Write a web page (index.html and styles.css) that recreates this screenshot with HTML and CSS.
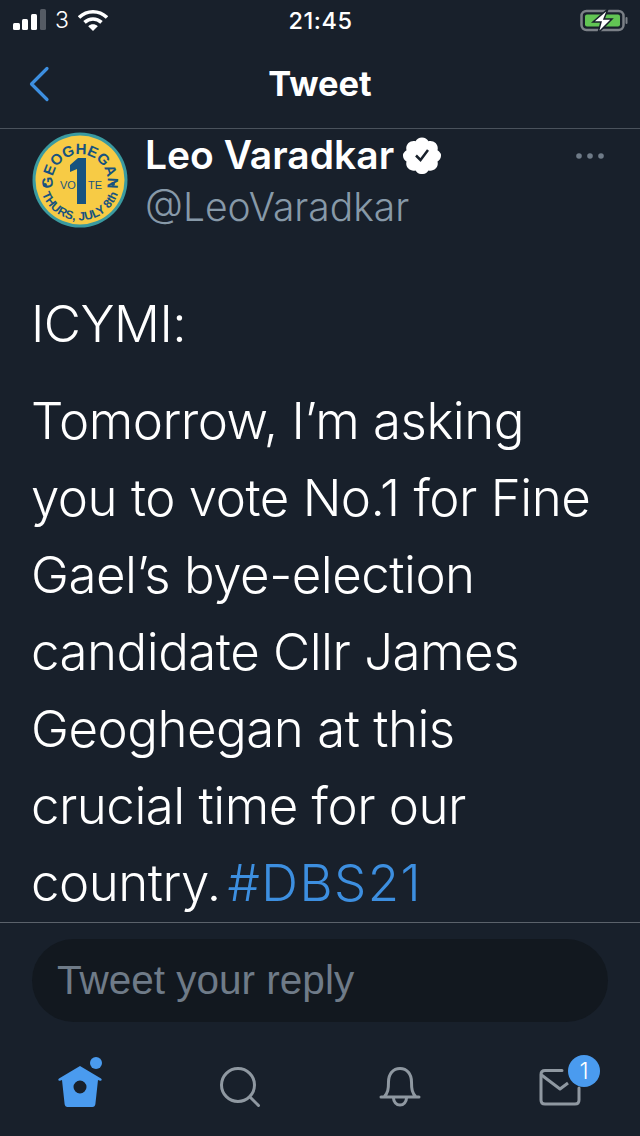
FILE: index.html
```html
<!DOCTYPE html>
<html lang="en">
<head>
  <meta charset="UTF-8" />
  <title>Tweet</title>
  <link rel="stylesheet" href="styles.css">
</head>
<body>
  <div class="screen">
    <!-- status bar -->
    <div class="status">
      <div class="status-left">
        <svg class="signal" width="33" height="22" viewBox="0 0 33 22">
          <rect x="0" y="14" width="7" height="7" rx="1.500" fill="#fff"/>
          <rect x="9" y="10" width="6" height="11" rx="1.500" fill="#fff"/>
          <rect x="18" y="5" width="6" height="16" rx="1.500" fill="#fff"/>
          <rect x="27" y="0" width="6" height="21" rx="1.500" fill="#555b64"/>
        </svg>
        <span class="carrier">3</span>
        <svg class="wifi" width="30" height="22" viewBox="0 0 30 22">
          <path d="M1 8.500C9 .8 21 .8 29 8.500" fill="none" stroke="#fff" stroke-width="3.600"/>
          <path d="M6.500 13.300c5-4.500 12-4.500 17 0" fill="none" stroke="#fff" stroke-width="3.600"/>
          <path d="M10.200 17.200c3-2.600 6.600-2.600 9.600 0L15 22z" fill="#fff"/>
        </svg>
      </div>
      <span class="clock">21:45</span>
      <div class="status-right">
        <svg class="battery" width="48" height="24" viewBox="0 0 48 24">
          <rect x="1.500" y="2" width="42" height="19" rx="5" fill="none" stroke="#7b8087" stroke-width="2.500"/>
          <rect x="5" y="5.500" width="35" height="12" rx="2" fill="#62c554"/>
          <rect x="45.500" y="8" width="2" height="7" rx="1" fill="#7b8087"/>
          <path d="M28 0 13 13h8L18 24 32 10h-8z" fill="#fff" stroke="#18202b" stroke-width="1.500"/>
        </svg>
      </div>
    </div>

    <!-- nav -->
    <div class="nav">
      <svg class="back" width="22" height="36" viewBox="0 0 22 36">
        <path d="M19 2.500 3.500 18 19 33.500" fill="none" stroke="#3d8fe0" stroke-width="3.200" stroke-linecap="round" stroke-linejoin="round"/>
      </svg>
      <h1 class="nav-title">Tweet</h1>
    </div>

    <!-- tweet -->
    <div class="tweet">
      <div class="author">
        <svg class="avatar" width="98" height="98" viewBox="0 0 98 98">
          <defs>
            <path id="arcTop" d="M22 56A27.500 27.500 0 1 1 76 56"/>
            <path id="arcBottom" d="M8.700 53A40.500 40.500 0 0 0 89.300 53"/>
          </defs>
          <circle cx="49" cy="49" r="47.500" fill="#3a9aa0"/>
          <circle cx="49" cy="49" r="44.500" fill="#f7cb45"/>
          <path d="M39 34 47 27h8v46h-9V38l-7 3z" fill="#17537f"/>
          <text class="badge-name"><textPath href="#arcTop" startOffset="50%" text-anchor="middle">GEOGHEGAN</textPath></text>
          <text class="badge-date"><textPath href="#arcBottom" startOffset="50%" text-anchor="middle">THURS, JULY 8th</textPath></text>
          <text class="badge-vote" x="29" y="58">VO</text>
          <text class="badge-vote" x="57" y="58">TE</text>
          <circle cx="14" cy="54" r="2" fill="#17537f"/>
          <circle cx="82" cy="53" r="2" fill="#17537f"/>
        </svg>
        <div class="author-info">
          <div class="author-line">
            <span class="author-name">Leo Varadkar</span>
            <svg class="verified" width="38" height="38" viewBox="0 0 38 38">
              <path d="M19 1.500c2.800 0 5.200 1.500 6.500 3.700 2.500-.7 5.200 0 7.100 1.900s2.600 4.600 1.900 7.100c2.200 1.300 3.700 3.700 3.500 4.800 .2 2.800-1.300 5.200-3.500 6.500.7 2.500 0 5.200-1.900 7.100s-4.600 2.600-7.100 1.900c-1.300 2.200-3.700 3.700-6.500 3.500-2.800.2-5.200-1.300-6.500-3.500-2.500.7-5.200 0-7.100-1.900s-2.600-4.600-1.900-7.100C1.300 24.200-.2 21.800 0 19c-.2-1.100 1.300-3.500 3.500-4.800-.7-2.500 0-5.200 1.900-7.100s4.600-2.600 7.100-1.900c1.300-2.200 3.700-3.700 6.500-3.700z" fill="#fff"/>
              <path d="M13 19.500l4.500 4.500 7.500-10" fill="none" stroke="#18202b" stroke-width="2.500"/>
            </svg>
          </div>
          <div class="author-handle">@LeoVaradkar</div>
        </div>
        <svg class="more" width="30" height="8" viewBox="0 0 30 8">
          <circle cx="4" cy="4" r="2.800" fill="#6f7b88"/>
          <circle cx="15" cy="4" r="2.800" fill="#6f7b88"/>
          <circle cx="26" cy="4" r="2.800" fill="#6f7b88"/>
        </svg>
      </div>
      <p class="tweet-text first">ICYMI:</p>
      <p class="tweet-text">Tomorrow, I’m asking<br>you to vote No.1 for Fine<br>Gael’s bye-election<br>candidate Cllr James<br>Geoghegan at this<br>crucial time for our<br>country. <span class="hashtag">#DBS21</span></p>
    </div>

    <!-- reply -->
    <div class="reply-bar">
      <div class="reply-input">Tweet your reply</div>
    </div>

    <!-- tabs -->
    <div class="tabs">
      <div class="tab">
        <svg width="60" height="60" viewBox="0 0 60 60">
          <circle cx="46" cy="7" r="6" fill="#4a9bef"/>
          <path fill-rule="evenodd" d="M30 10 51 22.500c1.400 1 .6 2.700-1 2.200l-2-.7-2.600 24c-.2 2-1.300 3-3 3H17.600c-1.700 0-2.800-1-3-3L12 24l-2 .7c-1.600.5-2.400-1.200-1-2.200zM30 24.500a6.500 6.500 0 1 0 0 13 6.500 6.500 0 0 0 0-13z" fill="#4a9bef"/>
        </svg>
      </div>
      <div class="tab">
        <svg width="60" height="60" viewBox="0 0 60 60">
          <circle cx="28" cy="29" r="16.500" fill="none" stroke="#8f98a1" stroke-width="3"/>
          <path d="M40.500 41.500l8 8" fill="none" stroke="#8f98a1" stroke-width="3" stroke-linecap="round"/>
        </svg>
      </div>
      <div class="tab">
        <svg width="60" height="60" viewBox="0 0 60 60">
          <path d="M11 41h38M14 41c4-4 4.500-8 4.500-15C18.500 18 23 12.500 30 12.500S41.500 18 41.500 26c0 7 .5 11 4.500 15" fill="none" stroke="#8f98a1" stroke-width="3" stroke-linecap="round"/>
          <path d="M23.500 42a6.500 7 0 0 0 13 0" fill="none" stroke="#8f98a1" stroke-width="3"/>
        </svg>
      </div>
      <div class="tab tab-messages">
        <svg width="60" height="60" viewBox="0 0 60 60">
          <path d="M32 14.500H15c-2.500 0-4 1.500-4 4V44c0 2.500 1.500 4 4 4h30c2.500 0 4-1.500 4-4V32" fill="none" stroke="#8f98a1" stroke-width="3" stroke-linecap="round"/>
          <path d="M11.500 19 30 33l8-6" fill="none" stroke="#8f98a1" stroke-width="3" stroke-linejoin="round"/>
        </svg>
        <span class="badge">1</span>
      </div>
    </div>
  </div>
</body>
</html>
```

FILE: styles.css
```css
* {
  box-sizing: border-box;
}
body {
  margin: 0;
  font-family: 'Inter', 'Liberation Sans', sans-serif;
  background-color: #18202b;
  color: #fff;
}
.screen {
  width: 640px;
  height: 1136px;
  display: flex;
  flex-direction: column;
  overflow: hidden;
}
.status {
  height: 40px;
  padding: 9px 12px 0 13px;
  display: grid;
  grid-template-columns: 1fr auto 1fr;
  align-items: start;
  flex: none;
}
.status-left {
  display: flex;
  align-items: center;
  gap: 9px;
}
.status-right {
  display: flex;
  justify-content: flex-end;
}
.carrier {
  font-size: 23px;
  font-weight: 300;
  line-height: 22px;
}
.clock {
  font-size: 23.500px;
  font-weight: 500;
  line-height: 24px;
  letter-spacing: 0.5px;
}
.nav {
  height: 89px;
  flex: none;
  display: flex;
  align-items: center;
  justify-content: center;
  position: relative;
  border-bottom: 1px solid #4a525c;
  padding-bottom: 1px;
}
.back {
  position: absolute;
  left: 28px;
  top: 26px;
}
.nav-title {
  margin: 0;
  font-size: 34.500px;
  font-weight: 700;
  line-height: 40px;
}
.tweet {
  flex: 1;
  padding: 0 33px;
  overflow: hidden;
}
.author {
  display: flex;
  align-items: flex-start;
  padding-top: 2px;
  margin-left: -2px;
  position: relative;
}
.avatar {
  flex: none;
  margin-right: 16px;
}
.badge-name {
  font-family: 'Liberation Sans', sans-serif;
  font-size: 15px;
  font-weight: 700;
  fill: #17537f;
}
.badge-date {
  font-family: 'Liberation Sans', sans-serif;
  font-size: 12px;
  font-weight: 700;
  fill: #17537f;
}
.badge-vote {
  font-family: 'Liberation Sans', sans-serif;
  font-size: 11px;
  fill: #17537f;
}
.author-line {
  display: flex;
  align-items: center;
  gap: 9px;
}
.author-name {
  font-size: 39px;
  font-weight: 600;
  line-height: 47px;
}
.author-handle {
  font-size: 39px;
  font-weight: 300;
  line-height: 58px;
  color: #8799a8;
}
.more {
  position: absolute;
  right: 2px;
  top: 23px;
}
.tweet-text {
  margin: 0 0 0 -2px;
  font-size: 51px;
  font-weight: 300;
  line-height: 77px;
  letter-spacing: -0.500px;
}
.tweet-text.first {
  margin: 49px 0 20px -2px;
}
.hashtag {
  color: #3d8fe0;
  margin-left: -7px;
  letter-spacing: 1.500px;
}
.reply-bar {
  flex: none;
  height: 114px;
  border-top: 1px solid #5b626b;
  padding: 16px 32px 0 32px;
}
.reply-input {
  height: 83px;
  border-radius: 42px;
  background-color: #12181f;
  color: #6f7b88;
  font-family: 'Liberation Sans', sans-serif;
  font-size: 40.500px;
  line-height: 83px;
  padding-left: 25px;
}
.tabs {
  flex: none;
  height: 100px;
  display: grid;
  grid-template-columns: repeat(4, 160px);
  padding-top: 20px;
}
.tab {
  display: flex;
  justify-content: center;
  position: relative;
}
.badge {
  position: absolute;
  left: 88px;
  top: -1.500px;
  width: 32px;
  height: 32px;
  border-radius: 50%;
  background-color: #4a9bef;
  font-size: 23px;
  font-weight: 300;
  line-height: 32px;
  text-align: center;
}
```
